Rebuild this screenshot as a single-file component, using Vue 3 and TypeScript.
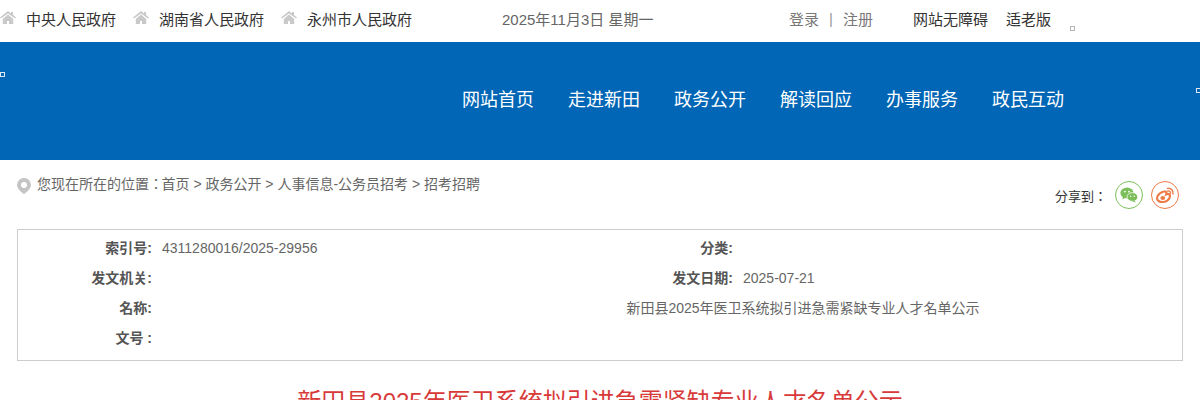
<script setup lang="ts">
const govLinks: string[] = ['中央人民政府', '湖南省人民政府', '永州市人民政府']
const navItems: string[] = ['网站首页', '走进新田', '政务公开', '解读回应', '办事服务', '政民互动']
</script>

<template>
  <div class="page">
    <header class="topbar">
      <ul class="gov">
        <li v-for="g in govLinks" :key="g">
          <svg class="home" viewBox="0 0 16 13" width="16" height="13" aria-hidden="true">
            <path d="M8 0 L11 2.4 V1 H13 V4 L16 6.6 L15 7.6 L8 2.4 L1 7.6 L0 6.6 Z M2.8 8 L8 3.6 L13.2 8 V13 H9 V10 H7 V13 H2.8 Z" fill="#c9c9c9" />
          </svg>
          <span>{{ g }}</span>
        </li>
      </ul>
      <div class="date">2025年11月3日 星期一</div>
      <div class="login"><span>登录</span><i>|</i><span>注册</span></div>
      <div class="tools"><span>网站无障碍</span><span>适老版</span></div>
      <b class="dot dot-a"></b>
    </header>

    <section class="banner">
      <b class="dot dot-b"></b>
      <nav class="nav">
        <a v-for="n in navItems" :key="n">{{ n }}</a>
      </nav>
      <b class="dot dot-c"></b>
    </section>

    <section class="crumbs">
      <div class="path">
        <svg class="pin" viewBox="0 0 14 16" width="14" height="16" aria-hidden="true">
          <path fill-rule="evenodd" d="M7 0 A7 7 0 0 1 14 7 C14 10.5 10 14 7 16 C4 14 0 10.5 0 7 A7 7 0 0 1 7 0 Z M7 4 A3 3 0 1 0 7 10 A3 3 0 1 0 7 4 Z" fill="#c4c4c4" />
        </svg>
        <span>您现在所在的位置：</span><span class="trail">首页 &gt; 政务公开 &gt; 人事信息-公务员招考 &gt; 招考招聘</span>
      </div>
      <div class="share">
        <span class="share-label">分享到：</span>
        <span class="circle wx">
          <svg viewBox="0 0 18 16" width="18" height="16" aria-hidden="true">
            <ellipse cx="7" cy="6" rx="6.6" ry="5.4" fill="#7cbf5a" />
            <path d="M3 9.5 L2.4 12.6 L6 10.6 Z" fill="#7cbf5a" />
            <ellipse cx="12.4" cy="10" rx="5.4" ry="4.4" fill="#7cbf5a" stroke="#fff" stroke-width="0.8" />
            <path d="M14.6 13.4 L15.8 15.6 L12 14 Z" fill="#7cbf5a" />
            <circle cx="4.9" cy="4.6" r="0.9" fill="#fff" />
            <circle cx="9" cy="4.6" r="0.9" fill="#fff" />
            <circle cx="10.6" cy="9.2" r="0.7" fill="#fff" />
            <circle cx="14.2" cy="9.2" r="0.7" fill="#fff" />
          </svg>
        </span>
        <span class="circle wb">
          <svg viewBox="0 0 20 17" width="20" height="17" aria-hidden="true">
            <path fill="none" stroke="#ee7a45" stroke-width="2.2" d="M2 11 C2 7.5 7 4 10.5 4.6 C12 5 11.4 6.6 11.2 7.4 C13 6.6 15 7 15 9 C15 12.4 11 15 7.6 15 C4.4 15 2 13.6 2 11 Z" />
            <ellipse cx="7.8" cy="11" rx="2.4" ry="2" fill="#ee7a45" />
            <path fill="none" stroke="#ee7a45" stroke-width="1.4" stroke-linecap="round" d="M12.4 1.4 C15.8 0.8 18.6 3.4 18 7 M12.8 4 C14.4 3.6 15.8 4.8 15.5 6.4" />
          </svg>
        </span>
      </div>
    </section>

    <section class="meta">
      <div class="row">
        <div class="cell"><label>索引号:</label><span class="latin">4311280016/2025-29956</span></div>
        <div class="cell right"><label>分类:</label><span></span></div>
      </div>
      <div class="row">
        <div class="cell"><label>发文机关:</label><span></span></div>
        <div class="cell right"><label>发文日期:</label><span class="latin">2025-07-21</span></div>
      </div>
      <div class="row">
        <div class="cell wide"><label>名称:</label><span class="name">新田县2025年医卫系统拟引进急需紧缺专业人才名单公示</span></div>
      </div>
      <div class="row">
        <div class="cell"><label>文号 :</label><span></span></div>
      </div>
    </section>

    <h1 class="title">新田县2025年医卫系统拟引进急需紧缺专业人才名单公示</h1>
  </div>
</template>

<style>
html, body { margin: 0; height: 400px; overflow: hidden; background: #fff; }
</style>

<style scoped>
.page {
  width: 1200px;
  position: relative;
  font-family: "Liberation Sans", "Noto Sans CJK JP", sans-serif;
  color: #555;
}
.topbar {
  height: 42px;
  display: flex;
  align-items: center;
  font-size: 15px;
  position: relative;
  box-sizing: border-box;
  padding-bottom: 6px;
}
.gov { display: flex; list-style: none; margin: 0; padding: 0; width: 502px; }
.gov li { display: flex; align-items: center; margin-right: 17px; color: #333; }
.gov li .home { margin-right: 10px; margin-top: -1px; }
.date { width: 287px; color: #666; }
.login { width: 124px; color: #777; display: flex; align-items: center; }
.login i { font-style: normal; margin: 0 10px; color: #999; }
.tools { display: flex; gap: 18px; color: #333; }
.dot { position: absolute; width: 3px; height: 3px; border: 1px solid #b5b5b5; background: #fff; display: block; }
.dot-a { left: 1070px; top: 26px; }
.banner {
  height: 118px;
  background: #0066b5;
  position: relative;
  display: flex;
  align-items: center;
  box-sizing: border-box;
  padding: 0 0 7px 462px;
}
.dot-b { left: 0; top: 30px; border-color: #dfe9f3; background: #0066b5; }
.dot-c { left: 1196px; top: 46px; border-color: #dfe9f3; background: #0066b5; }
.nav { display: flex; gap: 34px; font-size: 18px; color: #fff; }
.crumbs {
  height: 69px;
  display: flex;
  justify-content: space-between;
  padding: 0 21px 0 17px;
  font-size: 14px;
}
.path { display: flex; align-items: flex-start; padding-top: 14px; color: #666; line-height: 20px; }
.path .pin { margin: 4px 6px 0 0; }
.trail { margin-left: -1.5px; }
.share { display: flex; align-items: center; height: 28px; margin-top: 21px; color: #333; font-size: 13px; }
.circle {
  width: 28px; height: 28px; box-sizing: border-box; border-radius: 50%;
  display: flex; align-items: center; justify-content: center; margin-left: 8px;
}
.wx { border: 1px solid #7cbf5a; }
.wb { border: 1px solid #ee7a45; }
.meta {
  margin: 0 17px;
  height: 132px;
  box-sizing: border-box;
  border: 1px solid #ccc;
  font-size: 14px;
  padding-top: 2px;
  color: #666;
}
.row { display: flex; height: 30px; align-items: center; }
.cell { display: flex; width: 585px; align-items: center; }
.cell.wide { width: 100%; }
.cell label { width: 134px; text-align: right; font-weight: 700; color: #555; flex: none; }
.cell span { margin-left: 10px; }
.cell span.latin { margin-top: 2px; }
.cell.right { width: 581px; }
.cell.right label { width: 131px; }
.cell span.name { flex: 1; text-align: center; margin-left: 272px; }
.title {
  margin: 29px 0 0;
  font-size: 24px;
  line-height: 24px;
  font-weight: 400;
  text-align: center;
  color: #d83a3a;
}
</style>
